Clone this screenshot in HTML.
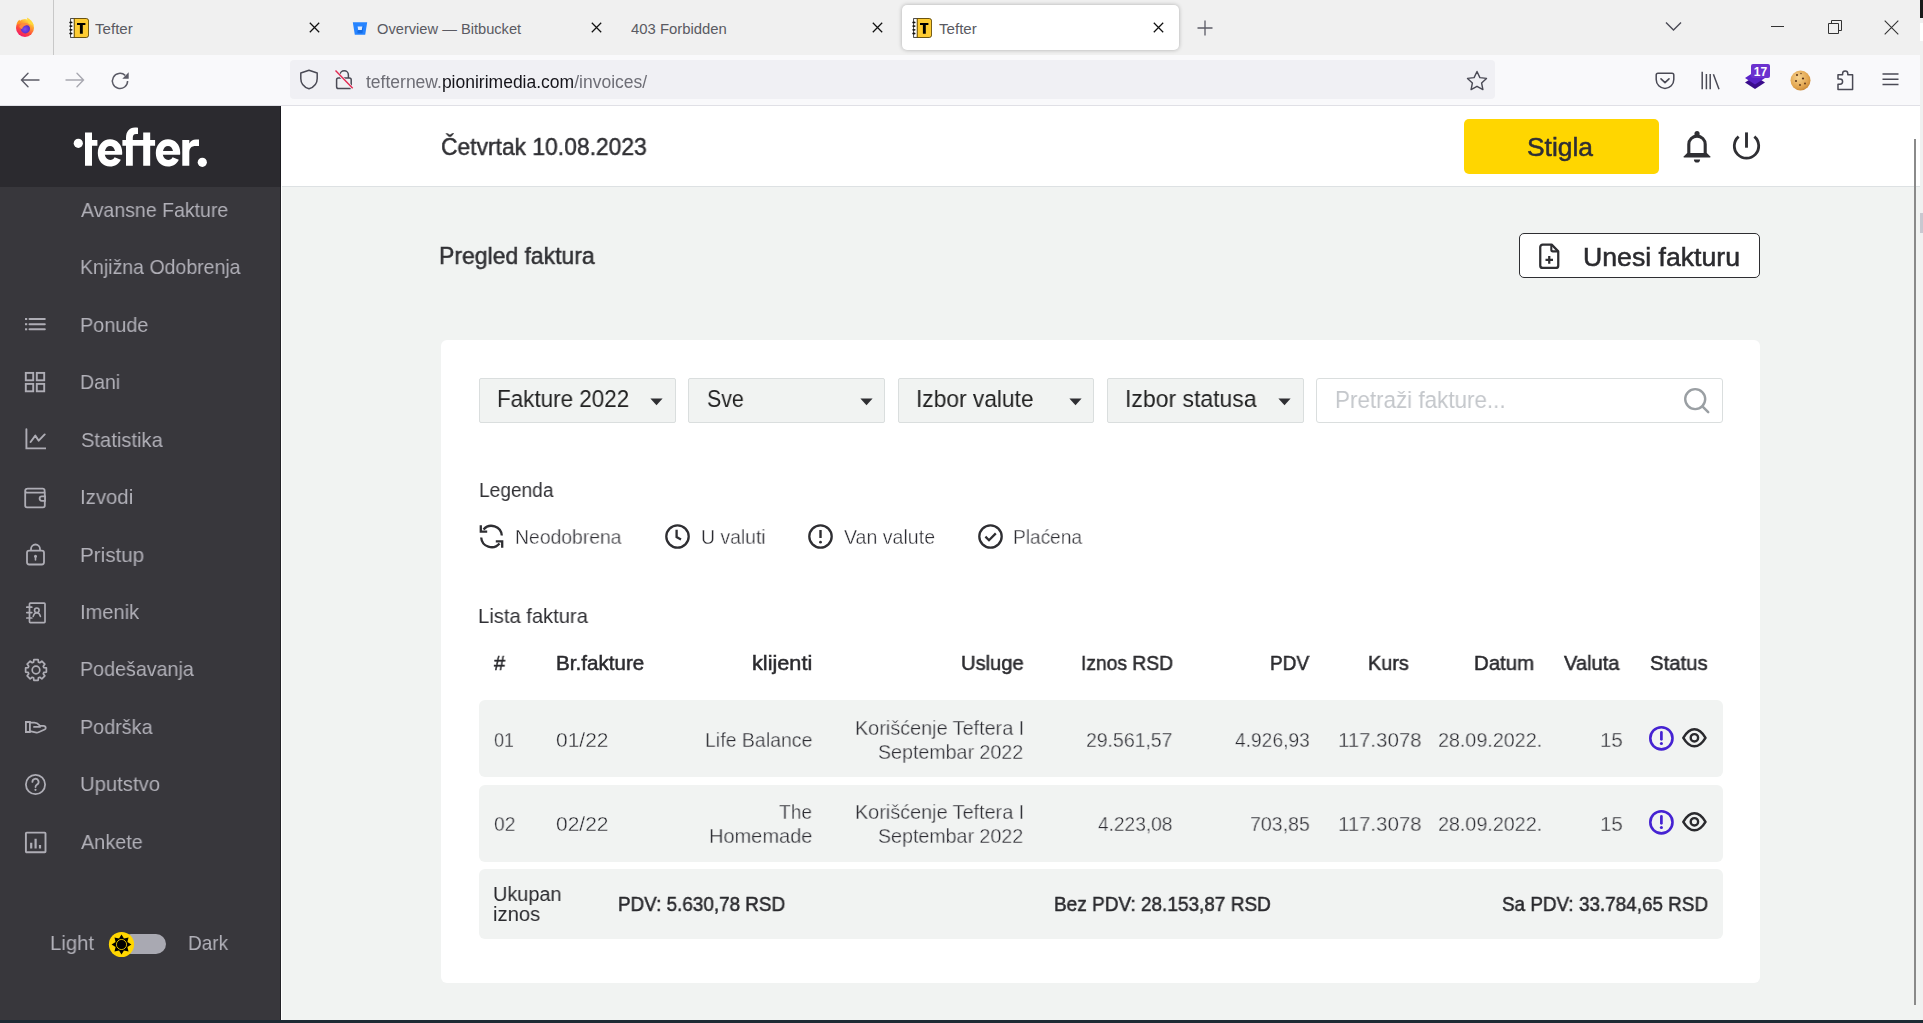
<!DOCTYPE html>
<html><head><meta charset="utf-8">
<style>
*{margin:0;padding:0;box-sizing:border-box}
html,body{width:1923px;height:1023px;overflow:hidden;background:#1c2a33;font-family:"Liberation Sans",sans-serif}
.abs{position:absolute}
#tabs{position:absolute;left:0;top:0;width:1920px;height:55px;background:#f0f0f0}
#toolbar{position:absolute;left:0;top:55px;width:1920px;height:51px;background:#f9f9fb;border-bottom:1px solid #e0e0e6}
.tabtxt{display:none}
#app{position:absolute;left:0;top:0;width:1920px;height:1020px;overflow:hidden;pointer-events:none}
.t{position:absolute;white-space:nowrap;transform-origin:0 0;will-change:transform}
</style></head><body>
<div id="tabs">
  <!-- firefox logo -->
  <svg class="abs" style="left:15px;top:17px" width="20" height="20" viewBox="0 0 20 20">
    <defs>
      <linearGradient id="ffg" x1="0.85" y1="0.05" x2="0.3" y2="1">
        <stop offset="0" stop-color="#fff44f"/><stop offset="0.3" stop-color="#ffa930"/><stop offset="0.65" stop-color="#ff4d3a"/><stop offset="1" stop-color="#f0136f"/>
      </linearGradient>
      <radialGradient id="ffp" cx="0.45" cy="0.55" r="0.6">
        <stop offset="0" stop-color="#7f4ef0"/><stop offset="1" stop-color="#5026c0"/>
      </radialGradient>
    </defs>
    <circle cx="10" cy="11" r="9" fill="url(#ffg)"/>
    <path d="M11.8 0.6C14.8 1.8 17.8 4.6 18.9 8.6L13.5 6.5z" fill="#ffd83a"/>
    <path d="M1.4 7.6C2.2 4.8 3.6 3.4 4.8 2.8 4.6 4.2 5 5.2 6 6z" fill="#ff9a20"/>
    <circle cx="10.4" cy="11.8" r="4.6" fill="url(#ffp)"/>
    <path d="M4.2 9.8C5.2 6.9 8.2 5.6 11 6.1 13.2 6.5 14.8 7.8 15.4 9.6 14 8.4 12.2 8 10.6 8.4 8.6 8.9 7.3 10.4 7.1 12.3 5.9 11.8 4.8 11 4.2 9.8z" fill="#ff8b3d"/>
  </svg>
  <div class="abs" style="left:53px;top:0;width:1px;height:55px;background:#c8c8c8"></div>

  <!-- tab1 -->
  <svg class="abs" style="left:69px;top:18px" width="20" height="20" viewBox="0 0 20 20">
    <rect x="1.6" y="0.6" width="4" height="18.8" fill="#fff" stroke="#333" stroke-width="0.9"/>
    <path d="M5.2 0.5h12a2.4 2.4 0 0 1 2.4 2.4v14.2a2.4 2.4 0 0 1-2.4 2.4h-12z" fill="#fecc32" stroke="#5a4300" stroke-width="0.9"/>
    <g fill="#111"><ellipse cx="1.9" cy="4.4" rx="1.7" ry="0.9"/><ellipse cx="1.9" cy="8.1" rx="1.7" ry="0.9"/><ellipse cx="1.9" cy="11.8" rx="1.7" ry="0.9"/><ellipse cx="1.9" cy="15.5" rx="1.7" ry="0.9"/></g>
    <path d="M8 4.9h8.4v2.2h-2.6v8.7h-2.9V7.1H8z" fill="#000"/>
  </svg>
  <div class="tabtxt" style="left:95px">Tefter</div>
  <svg class="abs xic" style="left:309px;top:22px" width="11" height="11" viewBox="0 0 11 11"><path d="M.8.8l9.4 9.4M10.2.8L.8 10.2" stroke="#111" stroke-width="1.25"/></svg>

  <!-- tab2 -->
  <svg class="abs" style="left:352px;top:21px" width="16" height="15" viewBox="0 0 16 15">
    <path d="M0.8 1.2h14.4l-2 12.6H2.8z" fill="#2684ff"/>
    <path d="M11.6 4.8l-1.2 7.4H5.6l-.3-2.2" fill="#0052cc" opacity="0.5"/>
    <path d="M5.6 5.5h4.8l-.6 3.5H6.2z" fill="#fff" opacity="0.85"/>
  </svg>
  <div class="tabtxt" style="left:377px">Overview — Bitbucket</div>
  <svg class="abs" style="left:591px;top:22px" width="11" height="11" viewBox="0 0 11 11"><path d="M.8.8l9.4 9.4M10.2.8L.8 10.2" stroke="#111" stroke-width="1.25"/></svg>

  <!-- tab3 -->
  <div class="tabtxt" style="left:631px">403 Forbidden</div>
  <svg class="abs" style="left:872px;top:22px" width="11" height="11" viewBox="0 0 11 11"><path d="M.8.8l9.4 9.4M10.2.8L.8 10.2" stroke="#111" stroke-width="1.25"/></svg>

  <!-- tab4 selected -->
  <div class="abs" style="left:902px;top:5px;width:277px;height:45px;background:#fff;border-radius:5px;box-shadow:0 0 4px rgba(0,0,0,0.28)"></div>
  <svg class="abs" style="left:912px;top:18px" width="20" height="20" viewBox="0 0 20 20">
    <rect x="1.6" y="0.6" width="4" height="18.8" fill="#fff" stroke="#333" stroke-width="0.9"/>
    <path d="M5.2 0.5h12a2.4 2.4 0 0 1 2.4 2.4v14.2a2.4 2.4 0 0 1-2.4 2.4h-12z" fill="#fecc32" stroke="#5a4300" stroke-width="0.9"/>
    <g fill="#111"><ellipse cx="1.9" cy="4.4" rx="1.7" ry="0.9"/><ellipse cx="1.9" cy="8.1" rx="1.7" ry="0.9"/><ellipse cx="1.9" cy="11.8" rx="1.7" ry="0.9"/><ellipse cx="1.9" cy="15.5" rx="1.7" ry="0.9"/></g>
    <path d="M8 4.9h8.4v2.2h-2.6v8.7h-2.9V7.1H8z" fill="#000"/>
  </svg>
  <div class="tabtxt" style="left:939px">Tefter</div>
  <svg class="abs" style="left:1153px;top:22px" width="11" height="11" viewBox="0 0 11 11"><path d="M.8.8l9.4 9.4M10.2.8L.8 10.2" stroke="#111" stroke-width="1.25"/></svg>

  <!-- plus -->
  <svg class="abs" style="left:1197px;top:20px" width="16" height="16" viewBox="0 0 16 16"><path d="M8 .5v15M.5 8h15" stroke="#5b5b66" stroke-width="1.3"/></svg>
  <!-- chevron -->
  <svg class="abs" style="left:1665px;top:21px" width="17" height="11" viewBox="0 0 17 11"><path d="M1 1.5l7.5 7.5L16 1.5" fill="none" stroke="#4a4a55" stroke-width="1.4"/></svg>
  <!-- window controls -->
  <div class="abs" style="left:1771px;top:26px;width:13px;height:1px;background:#333"></div>
  <svg class="abs" style="left:1828px;top:20px" width="14" height="14" viewBox="0 0 14 14"><path d="M.5 3.5h10v10H.5z M3.5 3.5V.5h10v10h-3" fill="none" stroke="#333" stroke-width="1"/></svg>
  <svg class="abs" style="left:1884px;top:20px" width="15" height="15" viewBox="0 0 15 15"><path d="M.7.7l13.6 13.6M14.3.7L.7 14.3" stroke="#333" stroke-width="1.1"/></svg>
</div>

<div id="toolbar">
  <!-- back -->
  <svg class="abs" style="left:20px;top:17px" width="20" height="16" viewBox="0 0 20 16"><path d="M19 8H2M8 1.3L1.5 8 8 14.7" fill="none" stroke="#5b5b66" stroke-width="1.4" stroke-linecap="round"/></svg>
  <svg class="abs" style="left:65px;top:17px" width="20" height="16" viewBox="0 0 20 16"><path d="M1 8h17M12 1.3L18.5 8 12 14.7" fill="none" stroke="#a8a8b0" stroke-width="1.4" stroke-linecap="round"/></svg>
  <svg class="abs" style="left:110px;top:16px" width="20" height="20" viewBox="0 0 20 20"><path d="M17.6 10a7.6 7.6 0 1 1-2.4-5.6" fill="none" stroke="#5b5b66" stroke-width="1.5"/><path d="M18.7 1.3v6.4h-6.4z" fill="#5b5b66"/></svg>

  <div class="abs" style="left:290px;top:5px;width:1205px;height:39px;background:#f0f0f4;border-radius:4px"></div>
  <!-- shield -->
  <svg class="abs" style="left:299px;top:14px" width="20" height="21" viewBox="0 0 20 21"><path d="M10 1.2L18.2 4v5.5c0 5-3.6 8.8-8.2 10.3C5.4 18.3 1.8 14.5 1.8 9.5V4z" fill="none" stroke="#4a4a55" stroke-width="1.5" stroke-linejoin="round"/></svg>
  <!-- lock slashed -->
  <svg class="abs" style="left:334px;top:14px" width="20" height="21" viewBox="0 0 20 21"><path d="M6 9V6a4.2 4.2 0 0 1 8.4 0v3" fill="none" stroke="#4a4a55" stroke-width="1.5"/><rect x="2.6" y="9" width="14.6" height="10.5" rx="1.8" fill="none" stroke="#4a4a55" stroke-width="1.5"/><path d="M1.2 1.5l17.5 18" stroke="#f0f0f4" stroke-width="3"/><path d="M1.5 1.5l17.2 17.7" stroke="#e22850" stroke-width="1.4"/></svg>
  <div class="t" style="left:366px;top:17px;font-size:17.5px;line-height:20px;color:#6e6e76"><span>tefternew.</span><span style="color:#15141a">pionirimedia.com</span><span>/invoices/</span></div>
  <!-- star -->
  <svg class="abs" style="left:1466px;top:15px" width="22" height="21" viewBox="0 0 22 21"><path d="M11 1.5l2.9 6.1 6.6.8-4.9 4.6 1.3 6.6L11 16.3l-5.9 3.3 1.3-6.6L1.5 8.4l6.6-.8z" fill="none" stroke="#4a4a55" stroke-width="1.4" stroke-linejoin="round"/></svg>

  <!-- pocket -->
  <svg class="abs" style="left:1655px;top:17px" width="20" height="18" viewBox="0 0 20 18"><path d="M3 1.2h14a1.8 1.8 0 0 1 1.8 1.8v4.6c0 4.8-3.9 8.8-8.8 8.8S1.2 12.4 1.2 7.6V3A1.8 1.8 0 0 1 3 1.2z" fill="none" stroke="#4a4a55" stroke-width="1.5"/><path d="M6 6.8l4 3.8 4-3.8" fill="none" stroke="#4a4a55" stroke-width="1.6" stroke-linecap="round" stroke-linejoin="round"/></svg>
  <!-- library -->
  <svg class="abs" style="left:1701px;top:16px" width="20" height="19" viewBox="0 0 20 19"><path d="M1.2.8v17.5M5.4 3v15.3M9.2 3v15.3M12.4 3.2l5.6 15" stroke="#4a4a55" stroke-width="1.5" fill="none"/></svg>
  <!-- ext layers -->
  <svg class="abs" style="left:1744px;top:9px" width="28" height="28" viewBox="0 0 28 28">
    <path d="M1 18.5L11 12l10 6.5L11 25z" fill="#3a0c8c"/>
    <path d="M1 14L11 7.5 21 14 11 20.5z" fill="#5a23c8"/>
    <rect x="7" y="0" width="19" height="14" rx="2" fill="#6c32cf"/>
    <text x="16.5" y="11.6" font-family="Liberation Sans" font-weight="bold" font-size="12" fill="#fff" text-anchor="middle">17</text>
  </svg>
  <!-- cookie -->
  <svg class="abs" style="left:1790px;top:15px" width="21" height="21" viewBox="0 0 21 21">
    <defs><radialGradient id="ck" cx="0.4" cy="0.35" r="0.7"><stop offset="0" stop-color="#f6d28f"/><stop offset="0.7" stop-color="#e2a54e"/><stop offset="1" stop-color="#c98634"/></radialGradient></defs>
    <circle cx="10.5" cy="10.5" r="10" fill="url(#ck)"/>
    <g fill="#5a3318"><circle cx="7" cy="5" r="1"/><circle cx="13" cy="8.5" r="1.1"/><circle cx="6" cy="11" r="1"/><circle cx="10" cy="15" r="0.9"/><circle cx="15" cy="13.5" r="0.9"/><circle cx="11" cy="3.5" r="0.7"/></g>
  </svg>
  <!-- puzzle -->
  <svg class="abs" style="left:1836px;top:15px" width="20" height="21" viewBox="0 0 20 21"><path d="M2 8.5V4.8h4.6V3.5a2.6 2.6 0 0 1 5.2 0v1.3h4.8v14.6H2v-5.2h2a2.6 2.6 0 0 0 0-5.2H2z" fill="none" stroke="#4a4a55" stroke-width="1.5" stroke-linejoin="round"/></svg>
  <!-- hamburger -->
  <svg class="abs" style="left:1882px;top:18px" width="17" height="13" viewBox="0 0 17 13"><path d="M.5 1h16M.5 6.2h16M.5 11.6h16" stroke="#4a4a55" stroke-width="1.5"/></svg>
</div>
<!-- app bg -->
<div class="abs" style="left:0;top:106px;width:1920px;height:914px;background:#f1f3f2"></div>
<div class="abs" style="left:281px;top:106px;width:1px;height:914px;background:#fff"></div>
<!-- sidebar -->
<div class="abs" style="left:0;top:106px;width:281px;height:914px;background:#38373c;border-right:1px solid #232227"></div>
<div class="abs" style="left:0;top:106px;width:281px;height:81px;background:#2b2a2f;border-right:1px solid #1d1c21"></div>
<!-- logo -->
<svg class="abs" style="left:60px;top:120px" width="160" height="60" viewBox="0 0 160 60">
  <g fill="#fff">
    <circle cx="18.3" cy="23.3" r="4.6"/>
    <!-- t -->
    <path d="M25 12.5h7v7.5h5.4v5.8H32v20h-7z"/>
    <!-- e -->
    <path d="M50 19.3c7 0 12.2 5.4 12.2 13 0 .9 0 1.6-.1 2.4H44.8c.8 3.2 2.7 5.2 5.4 5.2 2 0 3.5-.9 4.4-2.6l6.2 2.5c-1.9 4-5.8 6.8-10.8 6.8-7.2 0-12.2-5.8-12.2-13.6S43 19.3 50 19.3zm5 11.6c-.6-2.9-2.5-4.9-5-4.9s-4.4 2-5 4.9z"/>
    <!-- f + t -->
    <path d="M66 45.8V25.8h-3.6V20H66v-2.5C66 12 69 7.5 75 7.5c1 0 2 .1 3 .3v6.3c-.6-.1-1.2-.2-1.8-.2-2.6 0-3.4 1.5-3.4 4.2V20h10.4v-7.5h7V20h4.9v5.8h-4.9v20h-7v-20H72.8v20z"/>
    <!-- e -->
    <path d="M108 19.3c7 0 12.2 5.4 12.2 13 0 .9 0 1.6-.1 2.4H102.8c.8 3.2 2.7 5.2 5.4 5.2 2 0 3.5-.9 4.4-2.6l6.2 2.5c-1.9 4-5.8 6.8-10.8 6.8-7.2 0-12.2-5.8-12.2-13.6S101 19.3 108 19.3zm5 11.6c-.6-2.9-2.5-4.9-5-4.9s-4.4 2-5 4.9z"/>
    <!-- r -->
    <path d="M122.3 45.8V20h7v3.4c1.4-2.6 3.6-3.9 6.6-3.9h3.1v6.6h-3.4c-3.9 0-6.3 2-6.3 6.5v13.2z"/>
    <circle cx="142.3" cy="42.3" r="4.6"/>
  </g>
</svg>
<!-- sidebar icons -->
<g></g>
<svg class="abs" style="left:24px;top:317px" width="22" height="15" viewBox="0 0 22 15"><g fill="#aeadb5"><rect x="1" y="1" width="2.2" height="2"/><rect x="1" y="6.2" width="2.2" height="2"/><rect x="1" y="11.3" width="2.2" height="2"/></g><path d="M5.5 2h15.3M5.5 7.2h15.3M5.5 12.3h15.3" stroke="#aeadb5" stroke-width="2" stroke-linecap="round"/></svg>
<svg class="abs" style="left:24px;top:371px" width="22" height="22" viewBox="0 0 22 22"><g fill="none" stroke="#aeadb5" stroke-width="1.9"><rect x="1.8" y="1.9" width="7.4" height="7.4"/><rect x="12.8" y="1.9" width="7.4" height="7.4"/><rect x="1.8" y="12.9" width="7.4" height="7.4"/><rect x="12.8" y="12.9" width="7.4" height="7.4"/></g></svg>
<svg class="abs" style="left:24px;top:428px" width="22" height="22" viewBox="0 0 22 22"><path d="M2.4 1.3v19.1h19.1" fill="none" stroke="#aeadb5" stroke-width="1.9" stroke-linecap="round"/><path d="M6.6 14l4.7-6.4 3.4 5.1 6-6.3" fill="none" stroke="#aeadb5" stroke-width="1.9" stroke-linecap="round" stroke-linejoin="round"/></svg>
<svg class="abs" style="left:24px;top:486px" width="23" height="23" viewBox="0 0 23 23"><path d="M3.2 2.6h15.6a1.8 1.8 0 0 1 1.8 1.8v2.2M1.2 4.8a2.2 2.2 0 0 1 2.2-2.2M1.2 4.6v15a1.8 1.8 0 0 0 1.8 1.8h16a1.8 1.8 0 0 0 1.8-1.8V6.6H3a1.8 1.8 0 0 1-1.8-1.8" fill="none" stroke="#aeadb5" stroke-width="1.8"/><path d="M21 10.4h-3.2a2.2 2.2 0 0 0 0 4.4H21z" fill="#38373c" stroke="#aeadb5" stroke-width="1.8"/></svg>
<svg class="abs" style="left:24px;top:543px" width="23" height="23" viewBox="0 0 23 23"><path d="M7 7.5V6a4.5 4.5 0 0 1 9 0v1.5" fill="none" stroke="#aeadb5" stroke-width="1.8"/><rect x="3" y="7.6" width="17" height="13.9" rx="2.2" fill="none" stroke="#aeadb5" stroke-width="1.8"/><circle cx="11.5" cy="13.3" r="1.5" fill="#aeadb5"/><path d="M11.5 13.5v3.5" stroke="#aeadb5" stroke-width="1.6" stroke-linecap="round"/></svg>
<svg class="abs" style="left:24px;top:601px" width="23" height="23" viewBox="0 0 23 23"><rect x="5.5" y="2.2" width="15.5" height="19.4" rx="0.8" fill="none" stroke="#aeadb5" stroke-width="1.7"/><path d="M2.8 6.2h5M2.8 11.6h5M2.8 17h5" stroke="#aeadb5" stroke-width="1.7" stroke-linecap="round"/><circle cx="12.8" cy="9.3" r="2.3" fill="none" stroke="#aeadb5" stroke-width="1.6"/><path d="M9.2 15.4c.6-2.4 2-3.7 3.6-3.7s3 1.3 3.6 3.7" fill="none" stroke="#aeadb5" stroke-width="1.6" stroke-linecap="round"/></svg>
<svg class="abs" style="left:23.5px;top:657.5px" width="24" height="24" viewBox="0 0 24 24"><path fill="none" stroke="#aeadb5" stroke-width="1.7" stroke-linejoin="round" d="M9.58 4.17 L9.89 1.61 L14.11 1.61 L14.42 4.17 L15.83 4.75 L17.86 3.16 L20.84 6.14 L19.25 8.17 L19.83 9.58 L22.39 9.89 L22.39 14.11 L19.83 14.42 L19.25 15.83 L20.84 17.86 L17.86 20.84 L15.83 19.25 L14.42 19.83 L14.11 22.39 L9.89 22.39 L9.58 19.83 L8.17 19.25 L6.14 20.84 L3.16 17.86 L4.75 15.83 L4.17 14.42 L1.61 14.11 L1.61 9.89 L4.17 9.58 L4.75 8.17 L3.16 6.14 L6.14 3.16 L8.17 4.75z"/><circle cx="12" cy="12" r="3.8" fill="none" stroke="#aeadb5" stroke-width="1.7"/></svg>
<svg class="abs" style="left:24px;top:718px" width="23" height="17" viewBox="0 0 23 17"><path d="M1.9 4h4v10h-4z" fill="none" stroke="#aeadb5" stroke-width="1.8"/><path d="M5.9 4.6h4.4c2 0 3.6.8 4.9 2.4l.5.9h3.8c1 0 2.1.9 2.2 1.9.1.8-.3 1.4-1 1.7l-6.2 2.8c-.6.3-1.3.4-2 .3L5.9 13.2" fill="none" stroke="#aeadb5" stroke-width="1.8" stroke-linejoin="round"/><path d="M10 8.9h6" stroke="#aeadb5" stroke-width="1.8" stroke-linecap="round"/></svg>
<svg class="abs" style="left:24px;top:773px" width="23" height="23" viewBox="0 0 23 23"><circle cx="11.5" cy="11.5" r="9.6" fill="none" stroke="#aeadb5" stroke-width="1.8"/><path d="M8.4 8.9a3.1 3.1 0 1 1 4.6 2.7c-1 .6-1.5 1.2-1.5 2.5" fill="none" stroke="#aeadb5" stroke-width="1.8" stroke-linecap="round"/><circle cx="11.5" cy="16.8" r="1.1" fill="#aeadb5"/></svg>
<svg class="abs" style="left:24px;top:831px" width="23" height="23" viewBox="0 0 23 23"><rect x="1.9" y="1.6" width="19.6" height="19.6" rx="0.8" fill="none" stroke="#aeadb5" stroke-width="1.9"/><path d="M7.2 11.8v5.6M11.6 7.8v9.6M16 14v3.4" stroke="#aeadb5" stroke-width="2.2"/></svg>
<!-- toggle -->
<div class="abs" style="left:121px;top:934px;width:45px;height:20px;border-radius:10px;background:#a9a9b2"></div>
<svg class="abs" style="left:108px;top:931px" width="27" height="27" viewBox="0 0 27 27">
  <circle cx="13.5" cy="13.5" r="12.6" fill="#ffd600"/>
  <path d="M13.50,3.60 L15.95,7.59 L20.50,6.50 L19.41,11.05 L23.40,13.50 L19.41,15.95 L20.50,20.50 L15.95,19.41 L13.50,23.40 L11.05,19.41 L6.50,20.50 L7.59,15.95 L3.60,13.50 L7.59,11.05 L6.50,6.50 L11.05,7.59z" fill="#000"/>
  <circle cx="13.5" cy="13.5" r="5.0" fill="#000" stroke="#ffd600" stroke-width="0.9"/>
  <circle cx="13.5" cy="13.5" r="4.3" fill="#000"/>
</svg>

<!-- header -->
<div class="abs" style="left:282px;top:106px;width:1638px;height:81px;background:#fff;border-bottom:1px solid #dde1e3"></div>
<div class="abs" style="left:1464px;top:119px;width:195px;height:55px;background:#ffd600;border-radius:5px"></div>
<!-- bell -->
<svg class="abs" style="left:1682px;top:130px" width="30" height="34" viewBox="0 0 30 34"><path d="M6.8 24V14.3a8.2 8.2 0 0 1 16.4 0V24" fill="none" stroke="#2f2f33" stroke-width="3.1"/><path d="M1.7 27.6h26.6v-1L24.8 23H5.2L1.7 26.6z" fill="#2f2f33"/><path d="M12.5 5.5V3.6a2.55 2.55 0 0 1 5.1 0v1.9z" fill="#2f2f33"/><path d="M11.9 29.5h6.2a3.1 3.1 0 0 1-6.2 0z" fill="#2f2f33"/></svg>
<!-- power -->
<svg class="abs" style="left:1731px;top:130px" width="31" height="31" viewBox="0 0 31 31"><path d="M23.34 6.65A12.2 12.2 0 1 1 7.66 6.65" fill="none" stroke="#2f2f33" stroke-width="2.8"/><path d="M15.5 2.4v15.3" stroke="#2f2f33" stroke-width="2.9"/></svg>

<!-- Unesi fakturu button -->
<div class="abs" style="left:1519px;top:233px;width:241px;height:45px;background:#fff;border:1.5px solid #2e2e32;border-radius:5px"></div>
<svg class="abs" style="left:1537.5px;top:242.5px" width="22.5" height="26.5" viewBox="0 0 24 27" preserveAspectRatio="none"><path d="M5 1.6h9.6l7 7v14.2a2.6 2.6 0 0 1-2.6 2.6H5a2.6 2.6 0 0 1-2.6-2.6V4.2A2.6 2.6 0 0 1 5 1.6z" fill="none" stroke="#2e2e32" stroke-width="2.4" stroke-linejoin="round"/><path d="M14.2 1.8v5.2a1.6 1.6 0 0 0 1.6 1.6h5.4" fill="none" stroke="#2e2e32" stroke-width="2.2"/><path d="M12 13.2v8M8 17.2h8" stroke="#2e2e32" stroke-width="2.4"/></svg>

<!-- card -->
<div class="abs" style="left:441px;top:340px;width:1319px;height:643px;background:#fff;border-radius:6px"></div>
<!-- dropdowns -->
<div class="abs" style="left:479px;top:378px;width:197px;height:45px;background:#f1f3f2;border:1px solid #dadede;border-radius:2px"></div>
<div class="abs" style="left:688px;top:378px;width:197px;height:45px;background:#f1f3f2;border:1px solid #dadede;border-radius:2px"></div>
<div class="abs" style="left:898px;top:378px;width:196px;height:45px;background:#f1f3f2;border:1px solid #dadede;border-radius:2px"></div>
<div class="abs" style="left:1107px;top:378px;width:197px;height:45px;background:#f1f3f2;border:1px solid #dadede;border-radius:2px"></div>
<svg class="abs" style="left:649.5px;top:397.6px" width="14" height="9" viewBox="0 0 14 9"><path d="M.4 .4h12.2L6.5 7.2z" fill="#2f2f33"/></svg>
<svg class="abs" style="left:859.5px;top:397.6px" width="14" height="9" viewBox="0 0 14 9"><path d="M.4 .4h12.2L6.5 7.2z" fill="#2f2f33"/></svg>
<svg class="abs" style="left:1068.5px;top:397.6px" width="14" height="9" viewBox="0 0 14 9"><path d="M.4 .4h12.2L6.5 7.2z" fill="#2f2f33"/></svg>
<svg class="abs" style="left:1277.5px;top:397.6px" width="14" height="9" viewBox="0 0 14 9"><path d="M.4 .4h12.2L6.5 7.2z" fill="#2f2f33"/></svg>
<div class="abs" style="left:1316px;top:378px;width:407px;height:45px;background:#fff;border:1px solid #dadede;border-radius:3px"></div>
<svg class="abs" style="left:1683px;top:387px" width="27" height="27" viewBox="0 0 27 27"><circle cx="12.2" cy="12.1" r="10" fill="none" stroke="#9a9fa3" stroke-width="2.4"/><path d="M19.4 19.3l5.8 5.8" stroke="#9a9fa3" stroke-width="2.5" stroke-linecap="round"/></svg>

<!-- legend icons -->
<svg class="abs" style="left:478px;top:523px" width="27" height="27" viewBox="0 0 27 27"><path d="M23.8 12.5A10.4 10.4 0 0 0 5.5 6.5M3.2 14.5a10.4 10.4 0 0 0 18.3 6" fill="none" stroke="#2e2e32" stroke-width="2.3"/><path d="M2.8 2.2v6.4h6.4" fill="none" stroke="#2e2e32" stroke-width="2.3"/><path d="M24.2 24.8v-6.4h-6.4" fill="none" stroke="#2e2e32" stroke-width="2.3"/></svg>
<svg class="abs" style="left:664px;top:523px" width="27" height="27" viewBox="0 0 27 27"><circle cx="13.5" cy="13.5" r="11.2" fill="none" stroke="#2e2e32" stroke-width="2.3"/><path d="M12.6 6.8v7.2l4.4 2.4" fill="none" stroke="#2e2e32" stroke-width="2.3"/></svg>
<svg class="abs" style="left:807px;top:523px" width="27" height="27" viewBox="0 0 27 27"><circle cx="13.5" cy="13.5" r="11.2" fill="none" stroke="#2e2e32" stroke-width="2.3"/><path d="M13.5 7v8" stroke="#2e2e32" stroke-width="2.4"/><circle cx="13.5" cy="19.2" r="1.4" fill="#2e2e32"/></svg>
<svg class="abs" style="left:977px;top:523px" width="27" height="27" viewBox="0 0 27 27"><circle cx="13.5" cy="13.5" r="11.2" fill="none" stroke="#2e2e32" stroke-width="2.3"/><path d="M8.4 13.6l3.6 3.6 6.8-6.8" fill="none" stroke="#2e2e32" stroke-width="2.3"/></svg>

<!-- rows -->
<div class="abs" style="left:479px;top:700px;width:1244px;height:77px;background:#f1f3f2;border-radius:6px"></div>
<div class="abs" style="left:479px;top:785px;width:1244px;height:77px;background:#f1f3f2;border-radius:6px"></div>
<div class="abs" style="left:479px;top:869px;width:1244px;height:70px;background:#f1f3f2;border-radius:6px"></div>
<!-- status icons -->
<svg class="abs" style="left:1647px;top:724px" width="28" height="28" viewBox="0 0 28 28"><circle cx="14.4" cy="14.3" r="11.1" fill="none" stroke="#4522d2" stroke-width="2.6"/><path d="M14.4 8.4v6.9" stroke="#4522d2" stroke-width="2.7" stroke-linecap="round"/><circle cx="14.4" cy="19.5" r="1.55" fill="#4522d2"/></svg>
<svg class="abs" style="left:1681px;top:727px" width="28" height="22" viewBox="0 0 28 22"><path d="M2.3 10.8C6 4.6 9.5 2.3 13.4 2.3S20.8 4.6 24.5 10.8C20.8 17 17.3 19.3 13.4 19.3S6 17 2.3 10.8z" fill="none" stroke="#2a2a2e" stroke-width="2.5" stroke-linejoin="round"/><circle cx="13.4" cy="10.8" r="3.7" fill="none" stroke="#2a2a2e" stroke-width="2.4"/></svg>
<svg class="abs" style="left:1647px;top:808px" width="28" height="28" viewBox="0 0 28 28"><circle cx="14.4" cy="14.3" r="11.1" fill="none" stroke="#4522d2" stroke-width="2.6"/><path d="M14.4 8.4v6.9" stroke="#4522d2" stroke-width="2.7" stroke-linecap="round"/><circle cx="14.4" cy="19.5" r="1.55" fill="#4522d2"/></svg>
<svg class="abs" style="left:1681px;top:811px" width="28" height="22" viewBox="0 0 28 22"><path d="M2.3 10.8C6 4.6 9.5 2.3 13.4 2.3S20.8 4.6 24.5 10.8C20.8 17 17.3 19.3 13.4 19.3S6 17 2.3 10.8z" fill="none" stroke="#2a2a2e" stroke-width="2.5" stroke-linejoin="round"/><circle cx="13.4" cy="10.8" r="3.7" fill="none" stroke="#2a2a2e" stroke-width="2.4"/></svg>
<!-- scrollbar -->
<div class="abs" style="left:1914px;top:139px;width:2px;height:866px;background:#8a8a8a"></div>
<!-- right edge other window -->
<div class="abs" style="left:1920px;top:0;width:3px;height:1023px;background:#f0f0f0"></div>
<div class="abs" style="left:1920px;top:0;width:3px;height:18px;background:#1a1a1a"></div>
<div class="abs" style="left:1920px;top:23px;width:3px;height:18px;background:#fff"></div>
<div class="abs" style="left:1920px;top:213px;width:3px;height:20px;background:#c8c8d0"></div>
<!-- taskbar strip -->
<div class="abs" style="left:0;top:1020px;width:1923px;height:3px;background:#1c2a33"></div>

<div class="t" style="left:81.00px;top:199.81px;font-size:20.78px;line-height:20.78px;color:#b1b0b8;transform:scaleX(0.9401);">Avansne Fakture</div>
<div class="t" style="left:80.06px;top:257.27px;font-size:20.78px;line-height:20.78px;color:#b1b0b8;transform:scaleX(0.9395);">Knjižna Odobrenja</div>
<div class="t" style="left:80.04px;top:314.73px;font-size:20.78px;line-height:20.78px;color:#b1b0b8;transform:scaleX(0.9551);">Ponude</div>
<div class="t" style="left:80.06px;top:372.19px;font-size:20.78px;line-height:20.78px;color:#b1b0b8;transform:scaleX(0.9417);">Dani</div>
<div class="t" style="left:81.00px;top:429.65px;font-size:20.78px;line-height:20.78px;color:#b1b0b8;transform:scaleX(0.9705);">Statistika</div>
<div class="t" style="left:80.02px;top:487.11px;font-size:20.78px;line-height:20.78px;color:#b1b0b8;transform:scaleX(0.9804);">Izvodi</div>
<div class="t" style="left:80.01px;top:544.57px;font-size:20.78px;line-height:20.78px;color:#b1b0b8;transform:scaleX(0.9924);">Pristup</div>
<div class="t" style="left:80.03px;top:602.03px;font-size:20.78px;line-height:20.78px;color:#b1b0b8;transform:scaleX(0.9674);">Imenik</div>
<div class="t" style="left:80.05px;top:659.49px;font-size:20.78px;line-height:20.78px;color:#b1b0b8;transform:scaleX(0.9479);">Podešavanja</div>
<div class="t" style="left:80.05px;top:716.95px;font-size:20.78px;line-height:20.78px;color:#b1b0b8;transform:scaleX(0.9520);">Podrška</div>
<div class="t" style="left:80.02px;top:774.41px;font-size:20.78px;line-height:20.78px;color:#b1b0b8;transform:scaleX(0.9764);">Uputstvo</div>
<div class="t" style="left:81.00px;top:831.87px;font-size:20.78px;line-height:20.78px;color:#b1b0b8;transform:scaleX(0.9563);">Ankete</div>
<div class="t" style="left:50.02px;top:933.41px;font-size:20.78px;line-height:20.78px;color:#b1b0b8;transform:scaleX(0.9783);">Light</div>
<div class="t" style="left:188.09px;top:933.41px;font-size:20.78px;line-height:20.78px;color:#b1b0b8;transform:scaleX(0.9135);">Dark</div>
<div class="t" style="left:441.08px;top:134.68px;font-size:24.71px;line-height:24.71px;color:#303034;transform:scaleX(0.9247);-webkit-text-stroke:0.5px #303034;">Četvrtak 10.08.2023</div>
<div class="t" style="left:1526.99px;top:133.95px;font-size:26.16px;line-height:26.16px;color:#2e2e36;transform:scaleX(1.0095);-webkit-text-stroke:0.5px #2e2e36;">Stigla</div>
<div class="t" style="left:439.34px;top:244.08px;font-size:24.71px;line-height:24.71px;color:#303034;transform:scaleX(0.9294);-webkit-text-stroke:0.5px #303034;">Pregled faktura</div>
<div class="t" style="left:1582.93px;top:245.04px;font-size:25.00px;line-height:25.00px;color:#2a2a2e;transform:scaleX(1.0661);-webkit-text-stroke:0.5px #2a2a2e;">Unesi fakturu</div>
<div class="t" style="left:497.18px;top:386.68px;font-size:24.71px;line-height:24.71px;color:#222;transform:scaleX(0.9086);">Fakture 2022</div>
<div class="t" style="left:707.44px;top:386.68px;font-size:24.71px;line-height:24.71px;color:#222;transform:scaleX(0.8650);">Sve</div>
<div class="t" style="left:916.16px;top:386.68px;font-size:24.71px;line-height:24.71px;color:#222;transform:scaleX(0.9208);">Izbor valute</div>
<div class="t" style="left:1125.14px;top:386.68px;font-size:24.71px;line-height:24.71px;color:#222;transform:scaleX(0.9305);">Izbor statusa</div>
<div class="t" style="left:1334.69px;top:387.68px;font-size:24.71px;line-height:24.71px;color:#c4c7cb;transform:scaleX(0.9071);">Pretraži fakture...</div>
<div class="t" style="left:479.26px;top:479.97px;font-size:20.35px;line-height:20.35px;color:#303034;transform:scaleX(0.9400);">Legenda</div>
<div class="t" style="left:515.01px;top:528.01px;font-size:19.48px;line-height:19.48px;color:#2c2c32;transform:scaleX(0.9940);-webkit-text-stroke:0.35px #fff;">Neodobrena</div>
<div class="t" style="left:700.60px;top:528.01px;font-size:19.48px;line-height:19.48px;color:#2c2c32;transform:scaleX(0.9954);-webkit-text-stroke:0.35px #fff;">U valuti</div>
<div class="t" style="left:844.40px;top:528.01px;font-size:19.48px;line-height:19.48px;color:#2c2c32;transform:scaleX(1.0053);-webkit-text-stroke:0.35px #fff;">Van valute</div>
<div class="t" style="left:1013.22px;top:528.01px;font-size:19.48px;line-height:19.48px;color:#2c2c32;transform:scaleX(0.9809);-webkit-text-stroke:0.35px #fff;">Plaćena</div>
<div class="t" style="left:478.42px;top:606.35px;font-size:20.49px;line-height:20.49px;color:#303034;transform:scaleX(0.9848);">Lista faktura</div>
<div class="t" style="left:494.30px;top:653.43px;font-size:20.64px;line-height:20.64px;color:#2a2a2e;transform:scaleX(0.9667);-webkit-text-stroke:0.5px #2a2a2e;">#</div>
<div class="t" style="left:555.50px;top:653.43px;font-size:20.64px;line-height:20.64px;color:#2a2a2e;transform:scaleX(0.9989);-webkit-text-stroke:0.5px #2a2a2e;">Br.fakture</div>
<div class="t" style="left:751.95px;top:653.43px;font-size:20.64px;line-height:20.64px;color:#2a2a2e;transform:scaleX(1.0515);-webkit-text-stroke:0.5px #2a2a2e;">klijenti</div>
<div class="t" style="left:960.82px;top:653.43px;font-size:20.64px;line-height:20.64px;color:#2a2a2e;transform:scaleX(0.9756);-webkit-text-stroke:0.5px #2a2a2e;">Usluge</div>
<div class="t" style="left:1080.97px;top:653.43px;font-size:20.64px;line-height:20.64px;color:#2a2a2e;transform:scaleX(0.9330);-webkit-text-stroke:0.5px #2a2a2e;">Iznos RSD</div>
<div class="t" style="left:1270.08px;top:653.43px;font-size:20.64px;line-height:20.64px;color:#2a2a2e;transform:scaleX(0.9195);-webkit-text-stroke:0.5px #2a2a2e;">PDV</div>
<div class="t" style="left:1367.74px;top:653.43px;font-size:20.64px;line-height:20.64px;color:#2a2a2e;transform:scaleX(0.9636);-webkit-text-stroke:0.5px #2a2a2e;">Kurs</div>
<div class="t" style="left:1473.81px;top:653.43px;font-size:20.64px;line-height:20.64px;color:#2a2a2e;transform:scaleX(0.9903);-webkit-text-stroke:0.5px #2a2a2e;">Datum</div>
<div class="t" style="left:1563.90px;top:653.43px;font-size:20.64px;line-height:20.64px;color:#2a2a2e;transform:scaleX(0.9725);-webkit-text-stroke:0.5px #2a2a2e;">Valuta</div>
<div class="t" style="left:1649.80px;top:653.43px;font-size:20.64px;line-height:20.64px;color:#2a2a2e;transform:scaleX(0.9852);-webkit-text-stroke:0.5px #2a2a2e;">Status</div>
<div class="t" style="left:494.20px;top:730.31px;font-size:20.78px;line-height:20.78px;color:#2c2c32;transform:scaleX(0.8648);-webkit-text-stroke:0.35px #f1f3f2;">01</div>
<div class="t" style="left:556.40px;top:730.31px;font-size:20.78px;line-height:20.78px;color:#2c2c32;transform:scaleX(1.0094);-webkit-text-stroke:0.35px #f1f3f2;">01/22</div>
<div class="t" style="left:705.26px;top:730.31px;font-size:20.78px;line-height:20.78px;color:#2c2c32;transform:scaleX(0.9402);-webkit-text-stroke:0.35px #f1f3f2;">Life Balance</div>
<div class="t" style="left:854.95px;top:718.31px;font-size:20.78px;line-height:20.78px;color:#2c2c32;transform:scaleX(0.9544);-webkit-text-stroke:0.35px #f1f3f2;">Korišćenje Teftera I</div>
<div class="t" style="left:878.30px;top:742.31px;font-size:20.78px;line-height:20.78px;color:#2c2c32;transform:scaleX(0.9451);-webkit-text-stroke:0.35px #f1f3f2;">Septembar 2022</div>
<div class="t" style="left:1086.16px;top:730.31px;font-size:20.78px;line-height:20.78px;color:#2c2c32;transform:scaleX(0.9358);-webkit-text-stroke:0.35px #f1f3f2;">29.561,57</div>
<div class="t" style="left:1235.00px;top:730.31px;font-size:20.78px;line-height:20.78px;color:#2c2c32;transform:scaleX(0.9255);-webkit-text-stroke:0.35px #f1f3f2;">4.926,93</div>
<div class="t" style="left:1338.42px;top:730.31px;font-size:20.78px;line-height:20.78px;color:#2c2c32;transform:scaleX(0.9818);-webkit-text-stroke:0.35px #f1f3f2;">117.3078</div>
<div class="t" style="left:1438.45px;top:730.31px;font-size:20.78px;line-height:20.78px;color:#2c2c32;transform:scaleX(0.9492);-webkit-text-stroke:0.35px #f1f3f2;">28.09.2022.</div>
<div class="t" style="left:1600.02px;top:730.31px;font-size:20.78px;line-height:20.78px;color:#2c2c32;transform:scaleX(0.9838);-webkit-text-stroke:0.35px #f1f3f2;">15</div>
<div class="t" style="left:494.20px;top:814.31px;font-size:20.78px;line-height:20.78px;color:#2c2c32;transform:scaleX(0.9313);-webkit-text-stroke:0.35px #f1f3f2;">02</div>
<div class="t" style="left:556.40px;top:814.31px;font-size:20.78px;line-height:20.78px;color:#2c2c32;transform:scaleX(1.0094);-webkit-text-stroke:0.35px #f1f3f2;">02/22</div>
<div class="t" style="left:778.90px;top:802.31px;font-size:20.78px;line-height:20.78px;color:#2c2c32;transform:scaleX(0.9224);-webkit-text-stroke:0.35px #f1f3f2;">The</div>
<div class="t" style="left:708.54px;top:826.31px;font-size:20.78px;line-height:20.78px;color:#2c2c32;transform:scaleX(0.9633);-webkit-text-stroke:0.35px #f1f3f2;">Homemade</div>
<div class="t" style="left:854.95px;top:802.31px;font-size:20.78px;line-height:20.78px;color:#2c2c32;transform:scaleX(0.9544);-webkit-text-stroke:0.35px #f1f3f2;">Korišćenje Teftera I</div>
<div class="t" style="left:878.30px;top:826.31px;font-size:20.78px;line-height:20.78px;color:#2c2c32;transform:scaleX(0.9451);-webkit-text-stroke:0.35px #f1f3f2;">Septembar 2022</div>
<div class="t" style="left:1098.20px;top:814.31px;font-size:20.78px;line-height:20.78px;color:#2c2c32;transform:scaleX(0.9205);-webkit-text-stroke:0.35px #f1f3f2;">4.223,08</div>
<div class="t" style="left:1250.06px;top:814.31px;font-size:20.78px;line-height:20.78px;color:#2c2c32;transform:scaleX(0.9409);-webkit-text-stroke:0.35px #f1f3f2;">703,85</div>
<div class="t" style="left:1338.42px;top:814.31px;font-size:20.78px;line-height:20.78px;color:#2c2c32;transform:scaleX(0.9818);-webkit-text-stroke:0.35px #f1f3f2;">117.3078</div>
<div class="t" style="left:1438.45px;top:814.31px;font-size:20.78px;line-height:20.78px;color:#2c2c32;transform:scaleX(0.9492);-webkit-text-stroke:0.35px #f1f3f2;">28.09.2022.</div>
<div class="t" style="left:1600.02px;top:814.31px;font-size:20.78px;line-height:20.78px;color:#2c2c32;transform:scaleX(0.9838);-webkit-text-stroke:0.35px #f1f3f2;">15</div>
<div class="t" style="left:493.32px;top:884.27px;font-size:20.35px;line-height:20.35px;color:#2a2a2e;transform:scaleX(0.9770);">Ukupan</div>
<div class="t" style="left:493.31px;top:904.27px;font-size:20.35px;line-height:20.35px;color:#2a2a2e;transform:scaleX(0.9937);">iznos</div>
<div class="t" style="left:618.09px;top:894.01px;font-size:20.78px;line-height:20.78px;color:#2a2a2e;transform:scaleX(0.9087);-webkit-text-stroke:0.5px #2a2a2e;">PDV: 5.630,78 RSD</div>
<div class="t" style="left:1054.49px;top:894.01px;font-size:20.78px;line-height:20.78px;color:#2a2a2e;transform:scaleX(0.9148);-webkit-text-stroke:0.5px #2a2a2e;">Bez PDV: 28.153,87 RSD</div>
<div class="t" style="left:1502.00px;top:894.01px;font-size:20.78px;line-height:20.78px;color:#2a2a2e;transform:scaleX(0.9090);-webkit-text-stroke:0.5px #2a2a2e;">Sa PDV: 33.784,65 RSD</div>
<div class="t" style="left:95.30px;top:21.83px;font-size:14.97px;line-height:14.97px;color:#5a5a62;transform:scaleX(1.0093);will-change:auto;">Tefter</div>
<div class="t" style="left:377.40px;top:21.83px;font-size:14.97px;line-height:14.97px;color:#5a5a62;transform:scaleX(0.9792);will-change:auto;">Overview — Bitbucket</div>
<div class="t" style="left:631.00px;top:21.83px;font-size:14.97px;line-height:14.97px;color:#5a5a62;transform:scaleX(0.9926);will-change:auto;">403 Forbidden</div>
<div class="t" style="left:939.00px;top:21.83px;font-size:14.97px;line-height:14.97px;color:#5a5a62;transform:scaleX(1.0093);will-change:auto;">Tefter</div>

</body></html>
